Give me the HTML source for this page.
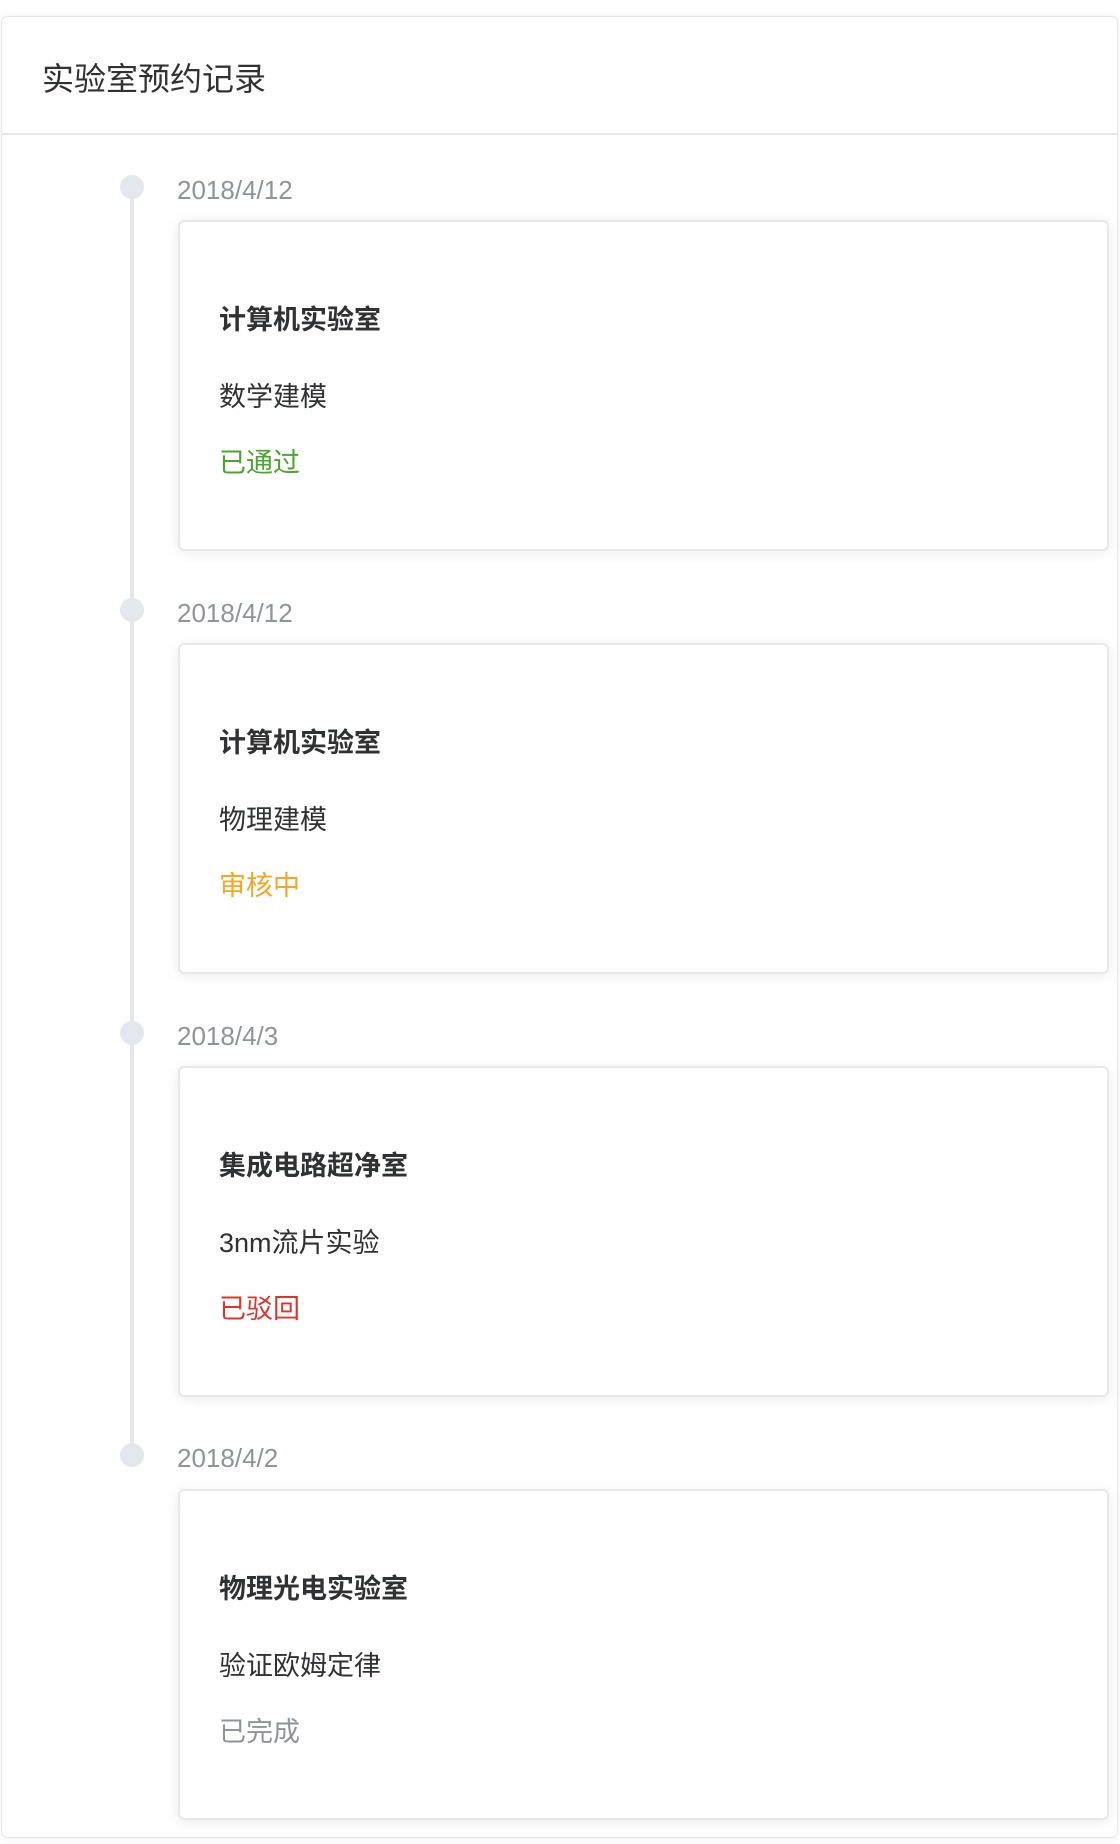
<!DOCTYPE html>
<html><head><meta charset="utf-8"><style>
*{margin:0;padding:0;box-sizing:border-box}
body{width:1120px;height:1844px;background:#fff;font-family:"Liberation Sans","Noto Sans CJK SC",sans-serif;position:relative;overflow:hidden}
.outer{position:absolute;left:1px;top:16px;width:1117px;height:1822px;border:1px solid #e6e8ec;border-radius:6px;background:#fff;box-shadow:0 0 10px rgba(0,0,0,.06)}
.hd{position:absolute;left:0;top:0;right:0;height:118px;border-bottom:2px solid #e6e8ec}
.hd span{position:absolute;left:40px;top:42px;font-size:32px;line-height:40px;color:#303133}
.line{position:absolute;left:130px;top:187px;width:4px;height:1268px;background:#e4e7ed}
.dot{position:absolute;left:120px;width:24px;height:24px;border-radius:50%;background:#e4e7ed}
.date{position:absolute;left:177px;font-size:26px;line-height:30px;color:#909399}
.card{position:absolute;left:178px;width:931px;height:331px;border:2px solid #e6e8ec;border-radius:6px;background:#fff;box-shadow:0 2px 14px rgba(0,0,0,.08)}
.card .t{position:absolute;left:39px;top:80px;font-size:27px;font-weight:bold;color:#303133;line-height:36px}
.card .s{position:absolute;left:39px;top:157px;font-size:27px;color:#303133;line-height:36px}
.card .st{position:absolute;left:39px;top:223px;font-size:27px;line-height:36px}
</style></head><body>
<div class="outer"><div class="hd"><span>实验室预约记录</span></div></div>
<div class="line"></div>
<div class="dot" style="top:175px"></div><div class="date" style="top:175px">2018/4/12</div>
<div class="card" style="top:220px"><div class="t">计算机实验室</div><div class="s">数学建模</div><div class="st" style="color:#4aa52e">已通过</div></div>
<div class="dot" style="top:598px"></div><div class="date" style="top:598px">2018/4/12</div>
<div class="card" style="top:643px"><div class="t">计算机实验室</div><div class="s">物理建模</div><div class="st" style="color:#f5a623">审核中</div></div>
<div class="dot" style="top:1021px"></div><div class="date" style="top:1021px">2018/4/3</div>
<div class="card" style="top:1066px"><div class="t">集成电路超净室</div><div class="s">3nm流片实验</div><div class="st" style="color:#e0342a">已驳回</div></div>
<div class="dot" style="top:1443px"></div><div class="date" style="top:1443px">2018/4/2</div>
<div class="card" style="top:1489px"><div class="t">物理光电实验室</div><div class="s">验证欧姆定律</div><div class="st" style="color:#909399">已完成</div></div>
</body></html>
